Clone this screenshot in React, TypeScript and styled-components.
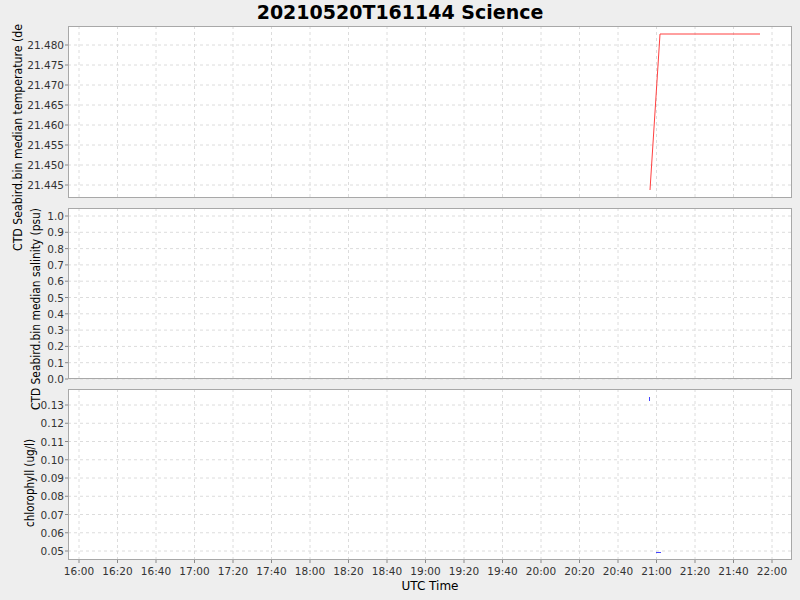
import React from "react";
import styled, { createGlobalStyle } from "styled-components";

const Global = createGlobalStyle`
  html, body { margin: 0; padding: 0; background: #eeeeee; }
  body { font-family: "DejaVu Sans", sans-serif; }
`;

const Page = styled.div`
  width: 800px;
  height: 600px;
  display: flex;
  flex-direction: column;
  background: #eeeeee;
`;

const Title = styled.div`
  height: 24px;
  line-height: 24px;
  text-align: center;
  font-size: 19px;
  font-weight: bold;
  color: #000;
`;

const Chart = styled.svg`
  display: block;
  font-family: "DejaVu Sans", sans-serif;
`;

const X0 = 68, X1 = 792;
const tx = (m: number) => 79 + (m * 693) / 360;
const times = Array.from({ length: 19 }, (_, i) => {
  const m = i * 20;
  const h = 16 + Math.floor(m / 60);
  const mm = m % 60;
  return { x: tx(m), label: `${h}:${mm.toString().padStart(2, "0")}` };
});

type Panel = { top: number; bottom: number; ticks: { y: number; label: string }[] };

const temp: Panel = {
  top: 26, bottom: 198,
  ticks: Array.from({ length: 8 }, (_, i) => {
    const v = 21.48 - i * 0.005;
    return { y: 45 + i * 20, label: v.toFixed(3) };
  }),
};
const sal: Panel = {
  top: 208, bottom: 379,
  ticks: Array.from({ length: 11 }, (_, i) => ({ y: 379 - i * 16.3, label: (i / 10).toFixed(1) })),
};
const chl: Panel = {
  top: 389, bottom: 560,
  ticks: Array.from({ length: 9 }, (_, i) => ({ y: 551 - i * 18.25, label: (0.05 + i * 0.01).toFixed(2) })),
};

function PanelG({ p, last }: { p: Panel; last?: boolean }) {
  return (
    <g>
      <rect x={X0} y={p.top} width={X1 - X0} height={p.bottom - p.top} fill="#fff" />
      {times.map((t) => (
        <line key={t.label} x1={t.x} x2={t.x} y1={p.top} y2={p.bottom} stroke="#dcdcdc" strokeDasharray="3 3" />
      ))}
      {p.ticks.map((t) => (
        <g key={t.label}>
          <line x1={X0} x2={X1} y1={t.y} y2={t.y} stroke="#dcdcdc" strokeDasharray="3 3" />
          <line x1={X0 - 3} x2={X0} y1={t.y} y2={t.y} stroke="#888" />
          <text x={X0 - 4} y={t.y + 4} fontSize="10.5" textAnchor="end" fill="#333">{t.label}</text>
        </g>
      ))}
      <rect x={X0 + 0.5} y={p.top + 0.5} width={X1 - X0 - 1} height={p.bottom - p.top - 1} fill="none" stroke="#a8a8a8" />
      {last &&
        times.map((t) => (
          <g key={t.label}>
            <line x1={t.x} x2={t.x} y1={p.bottom} y2={p.bottom + 3} stroke="#888" />
            <text x={t.x} y={p.bottom + 15} fontSize="10.5" textAnchor="middle" fill="#333">{t.label}</text>
          </g>
        ))}
    </g>
  );
}

export default function App() {
  return (
    <Page>
      <Global />
      <Title>20210520T161144 Science</Title>
      <Chart width={800} height={576} viewBox="0 24 800 576">
        <PanelG p={temp} />
        <PanelG p={sal} />
        <PanelG p={chl} last />
        <polyline points="650,190 660,34 760,34" fill="none" stroke="#ff4040" strokeWidth="1" />
        <line x1={649.5} x2={649.5} y1={397} y2={401} stroke="#4444ff" />
        <line x1={656} x2={661} y1={552.5} y2={552.5} stroke="#4444ff" />
        <text transform="translate(22,128) rotate(-90)" fontSize="12" textAnchor="middle" fill="#000" textLength={246} lengthAdjust="spacingAndGlyphs">
          CTD Seabird.bin median temperature (degC)
        </text>
        <text transform="translate(40,309) rotate(-90)" fontSize="12" textAnchor="middle" fill="#000" textLength={202} lengthAdjust="spacingAndGlyphs">
          CTD Seabird.bin median salinity (psu)
        </text>
        <text transform="translate(34,483) rotate(-90)" fontSize="12" textAnchor="middle" fill="#000" textLength={88} lengthAdjust="spacingAndGlyphs">
          chlorophyll (ug/l)
        </text>
        <text x={430} y={590} fontSize="12" textAnchor="middle" fill="#000">UTC Time</text>
      </Chart>
    </Page>
  );
}
